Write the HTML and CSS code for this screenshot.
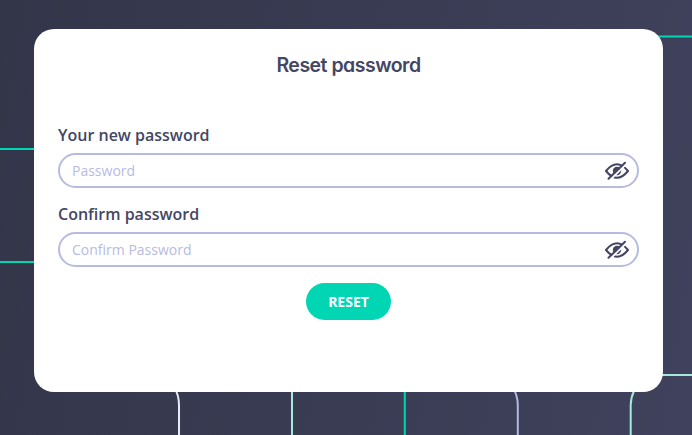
FILE: index.html
```html
<!DOCTYPE html>
<html lang="en">
<head>
<meta charset="utf-8">
<title>Reset password</title>
<link rel="stylesheet" href="styles.css">
</head>
<body>
<svg class="circuit" viewBox="0 0 692 435" fill="none" stroke-width="2" aria-hidden="true">
  <g stroke="#00d5b4">
    <path d="M0 149H50M0 262H50M640 36.5H692M404.8 380V435"/>
  </g>
  <g stroke="#a5e9dc">
    <path d="M292 380V435M630.7 435V405Q631 397 634 391Q640 375 655 375H692"/>
  </g>
  <path stroke="#e9e9f8" d="M174 387Q179 395 179 405V435"/>
  <path stroke="#b5b8e2" d="M512 386Q517.8 395 517.8 405V435"/>
</svg>
<main class="card">
  <h1 class="title">Reset password</h1>
  <form class="form">
    <label class="label" for="password">Your new password</label>
    <div class="field">
      <input class="input" id="password" type="password" placeholder="Password">
      <svg class="eye" viewBox="0 0 24 20" fill="none" stroke="#444664" stroke-width="2" stroke-linecap="round" aria-hidden="true">
        <path d="M1 10Q12-3.5 23 10Q12 23.5 1 10Z" stroke-linejoin="round"/>
        <circle cx="12" cy="10" r="4.2" fill="#444664" stroke="none"/>
        <path d="M5.5 18.5L21.2 3" stroke="#fff"/>
        <path d="M3.5 17.8L20 1.8"/>
      </svg>
    </div>
    <label class="label" for="confirm">Confirm password</label>
    <div class="field">
      <input class="input" id="confirm" type="password" placeholder="Confirm Password">
      <svg class="eye" viewBox="0 0 24 20" fill="none" stroke="#444664" stroke-width="2" stroke-linecap="round" aria-hidden="true">
        <path d="M1 10Q12-3.5 23 10Q12 23.5 1 10Z" stroke-linejoin="round"/>
        <circle cx="12" cy="10" r="4.2" fill="#444664" stroke="none"/>
        <path d="M5.5 18.5L21.2 3" stroke="#fff"/>
        <path d="M3.5 17.8L20 1.8"/>
      </svg>
    </div>
    <button class="reset" type="button">RESET</button>
  </form>
</main>
</body>
</html>
```
FILE: styles.css
```css
* {
  box-sizing: border-box;
}

body {
  margin: 0;
  height: 435px;
  padding: 29px 29px 43px 34px;
  overflow: hidden;
  background: linear-gradient(100deg, #333549, #40425d);
  color: #444664;
  font-family: "Open Sans", sans-serif;
}

.circuit {
  position: absolute;
  inset: 0;
  width: 692px;
  height: 435px;
}

.card {
  position: relative;
  height: 363px;
  padding: 21px 24px 20px;
  border-radius: 20px;
  background: #fff;
}

.title {
  margin: 0 0 42px;
  font: 600 19.5px/30px Inter, "Open Sans", sans-serif;
  font-feature-settings: "cv11" 1, "ss03" 1;
  letter-spacing: -0.5px;
  text-align: center;
}

.form {
  display: flex;
  flex-direction: column;
}

.label {
  height: 31px;
  font-size: 16px;
  font-weight: 600;
  line-height: 27px;
}

.field {
  display: flex;
  align-items: center;
  height: 35px;
  margin-bottom: 13px;
  padding: 0 8px 0 12px;
  border: 2px solid #b8bbe1;
  border-radius: 18px;
}

.input {
  flex: 1;
  min-width: 0;
  padding: 0;
  border: 0;
  outline: 0;
  background: none;
  font: 14px/20px "Open Sans", sans-serif;
}

.input::placeholder {
  color: #b8bbe1;
  opacity: 1;
}

.eye {
  width: 24px;
  height: 20px;
}

.reset {
  align-self: center;
  width: 85px;
  height: 37px;
  margin-top: 3px;
  padding: 0;
  border: 0;
  border-radius: 19px;
  background: #00d5b4;
  color: #fff;
  font: 700 14px/20px "Open Sans", sans-serif;
}
```
